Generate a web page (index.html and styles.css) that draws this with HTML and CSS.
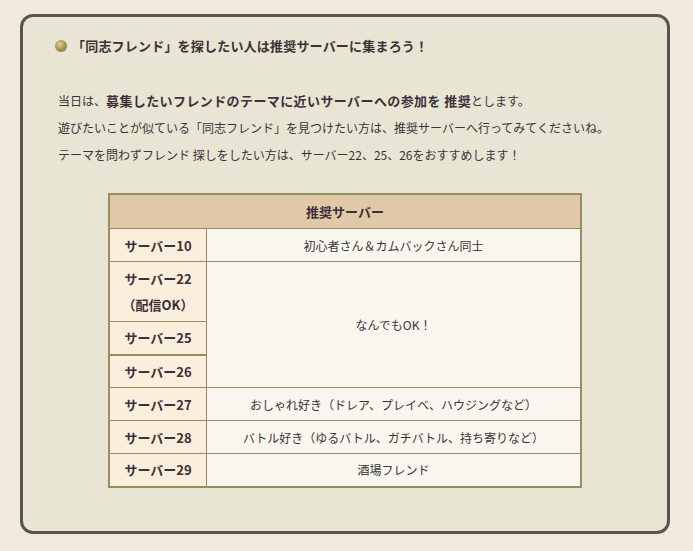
FILE: index.html
```html
<!DOCTYPE html>
<html lang="ja">
<head>
<meta charset="utf-8">
<link rel="stylesheet" href="styles.css">
</head>
<body>
<div class="box">
  <h2 class="title"><span class="bullet"></span>「同志フレンド」を探したい人は推奨サーバーに集まろう！</h2>
  <div class="intro">
    <p>当日は、<b>募集したいフレンドのテーマに近いサーバーへの参加を 推奨</b>とします。</p>
    <p>遊びたいことが似ている「同志フレンド」を見つけたい方は、推奨サーバーへ行ってみてくださいね。</p>
    <p>テーマを問わずフレンド 探しをしたい方は、サーバー22、25、26をおすすめします！</p>
  </div>
  <table class="servers">
    <thead>
      <tr class="h-row"><th colspan="2">推奨サーバー</th></tr>
    </thead>
    <tbody>
      <tr class="r1"><th>サーバー10</th><td>初心者さん＆カムバックさん同士</td></tr>
      <tr class="r2"><th>サーバー22<br>（配信OK）</th><td rowspan="3">なんでもOK！</td></tr>
      <tr class="r1"><th>サーバー25</th></tr>
      <tr class="r1 thick"><th>サーバー26</th></tr>
      <tr class="r1"><th>サーバー27</th><td>おしゃれ好き（ドレア、プレイベ、ハウジングなど）</td></tr>
      <tr class="r1"><th>サーバー28</th><td>バトル好き（ゆるバトル、ガチバトル、持ち寄りなど）</td></tr>
      <tr class="r1"><th>サーバー29</th><td>酒場フレンド</td></tr>
    </tbody>
  </table>
</div>
</body>
</html>
```

FILE: styles.css
```css
html, body {
  margin: 0;
  padding: 0;
}
body {
  background: #f1e9dd;
  padding: 14px 0 0 20px;
  font-family: "Noto Sans CJK JP", "Noto Sans", sans-serif;
  color: #3a3535;
  font-size: 12px;
}
.box {
  box-sizing: border-box;
  width: 650px;
  height: 520px;
  background: #e8e5d5;
  border: 3px solid #57544f;
  border-radius: 13px;
  padding: 19px 0 0 32px;
}
.title {
  margin: 0;
  display: flex;
  align-items: center;
  font-size: 13px;
  line-height: 20px;
  font-weight: bold;
  letter-spacing: 0.2px;
  color: #3d3232;
}
.bullet {
  display: inline-block;
  width: 12px;
  height: 12px;
  border-radius: 50%;
  margin-right: 5px;
  background: radial-gradient(circle at 40% 35%, #e0d49c 0%, #b3a15a 40%, #6e5d25 100%);
}
.intro {
  margin: 31px 0 0 3px;
}
.intro p {
  margin: 0;
  line-height: 27px;
  font-size: 12px;
}
.intro b {
  font-size: 13px;
  letter-spacing: 0.4px;
  color: #3d3036;
}
.servers {
  margin: 25px 0 0 53px;
  width: 474px;
  border-collapse: collapse;
  border: 2px solid #978d5e;
}
.servers th, .servers td {
  border: 1px solid #978d5e;
  padding: 0;
  text-align: center;
  font-size: 12px;
}
.servers thead th {
  background: #e0c9a9;
  height: 33px;
  font-size: 13px;
  color: #3d3036;
}
.servers tbody th {
  width: 96px;
  background: #faeedc;
  font-size: 13px;
  color: #3d3036;
  font-weight: bold;
}
.servers tbody td {
  background: #f9f6ef;
  color: #3a3535;
}
.r1 {
  height: 33px;
}
.r2 {
  height: 60px;
}
.r2 th {
  line-height: 26px;
}
.thick th {
  border-top: 2px solid #978d5e;
}
```
